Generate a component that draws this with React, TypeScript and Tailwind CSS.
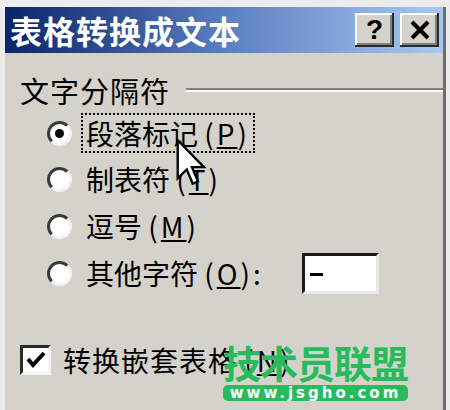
import React from "react";

const FONT = { fontFamily: '"Noto Sans CJK SC", "Noto Sans", sans-serif' };

function Radio({ checked }: { checked?: boolean }) {
  return (
    <div className="relative w-[25px] h-[25px] shrink-0 rounded-full bg-white border-[3px] border-t-[#3a3a3a] border-l-[#3a3a3a] border-r-[#f4f4f4] border-b-[#f4f4f4] flex items-center justify-center">
      {checked && <div className="w-[9px] h-[9px] rounded-full bg-black" />}
    </div>
  );
}

function TitleButton({ children }: { children: React.ReactNode }) {
  return (
    <div className="w-[39px] h-[34px] bg-[#d5d2cc] flex items-center justify-center shadow-[inset_-2px_-2px_#2a2a2a,inset_2px_2px_#ffffff,inset_-4px_-4px_#808080]">
      {children}
    </div>
  );
}

export default function App() {
  return (
    <div
      className="w-[450px] h-[410px] overflow-hidden bg-[#ececec] pt-[7px] pl-[5px]"
      style={FONT}
    >
      <div className="relative w-[441px] h-[420px] bg-[#d5d2cc] border-r-[3px] border-[#6e6e6e]">
        {/* Title bar */}
        <div className="h-[46px] flex items-center justify-between bg-gradient-to-r from-[#0a246a] via-[#5a7fc0] to-[#a8caf0] pl-[5px] pr-[4px]">
          <span className="text-white font-bold text-[32px] leading-none tracking-[1px]">
            表格转换成文本
          </span>
          <div className="flex gap-[6px]">
            <TitleButton>
              <span className="text-black font-bold text-[28px] leading-none" style={{ fontFamily: '"Liberation Sans", sans-serif' }}>?</span>
            </TitleButton>
            <TitleButton>
              <svg width="22" height="20" viewBox="0 0 22 20">
                <path d="M3 2 L19 18 M19 2 L3 18" stroke="#000" strokeWidth="4" />
              </svg>
            </TitleButton>
          </div>
        </div>

        {/* Body */}
        <div className="pl-[15px] pt-[19px] text-black">
          <div className="flex items-center h-[36px]">
            <span className="text-[29px] leading-none tracking-[1px]">文字分隔符</span>
            <div className="flex-1 ml-[16px] h-[4px] border-t-2 border-[#808080] border-b-2 border-b-white" />
          </div>

          <div className="pl-[27px] mt-[2px]">
            <div className="h-[46px] flex items-center">
              <Radio checked />
              <span className="ml-[11px] px-[3px] py-[2px] outline-dotted outline-2 outline-black text-[28px] leading-[32px]">
                段落标记 <span className="tracking-[3px]">(<u>P</u>)</span>
              </span>
            </div>
            <div className="h-[46px] flex items-center">
              <Radio />
              <span className="ml-[14px] text-[28px] leading-none">
                制表符 <span className="tracking-[3px]">(<u>T</u>)</span>
              </span>
            </div>
            <div className="h-[48px] flex items-center">
              <Radio />
              <span className="ml-[14px] text-[28px] leading-none">
                逗号 <span className="tracking-[3px]">(<u>M</u>)</span>
              </span>
            </div>
            <div className="h-[46px] flex items-center">
              <Radio />
              <span className="ml-[14px] text-[28px] leading-none">
                其他字符 <span className="tracking-[3px]">(<u>O</u>):</span>
              </span>
              <div className="ml-[38px] w-[77px] h-[41px] bg-white border-[3px] border-t-[#1a1a1a] border-l-[#1a1a1a] border-r-[#e8e8e8] border-b-[#e8e8e8] flex items-center pl-[5px]">
                <div className="w-[13px] h-[3px] bg-black mt-[2px]" />
              </div>
            </div>
          </div>

          <div className="mt-[44px] h-[40px] flex items-center">
            <div className="w-[31px] h-[30px] bg-white border-[3px] border-t-[#2a2a2a] border-l-[#2a2a2a] border-r-[#f4f4f4] border-b-[#f4f4f4] flex items-center justify-center">
              <svg width="20" height="18" viewBox="0 0 20 18">
                <path d="M2 8 L7 14 L18 2" stroke="#000" strokeWidth="4" fill="none" />
              </svg>
            </div>
            <span className="ml-[12px] text-[28px] leading-none tracking-[1px]">
              转换嵌套表格 <span className="tracking-[3px]">(<u>N</u>)</span>
            </span>
          </div>

          <div className="mt-[30px] flex gap-[22px]">
            <div className="w-[193px] h-[20px] border-t-[3px] border-[#5a5a5a]" />
            <div className="w-[190px] h-[20px] border-t-[3px] border-[#5a5a5a]" />
          </div>
        </div>

        {/* Mouse cursor */}
        <svg
          className="absolute left-[171px] top-[132px]"
          width="32"
          height="50"
          viewBox="0 0 13 21"
        >
          <path
            d="M0.5 0.5 L0.5 16.5 L4.3 12.8 L6.8 18.8 L9 17.8 L6.5 11.8 L11.5 11.8 Z"
            fill="#fff"
            stroke="#000"
            strokeWidth="1"
            strokeLinejoin="miter"
          />
        </svg>

        {/* Watermark */}
        <div className="absolute left-[218px] top-[333px] w-[185px] flex flex-col items-stretch">
          <span className="text-[#27bb5c] font-bold text-[38px] leading-[44px] tracking-[-1px] text-center">
            技术员联盟
          </span>
          <div className="mt-[1px] h-[16px] rounded-[5px] bg-[#27bb5c] flex items-center justify-center">
            <span
              className="text-white font-bold text-[15px] leading-none tracking-[3px]"
              style={{ fontFamily: '"DejaVu Sans", sans-serif' }}
            >
              www.jsgho.com
            </span>
          </div>
        </div>
      </div>
    </div>
  );
}
